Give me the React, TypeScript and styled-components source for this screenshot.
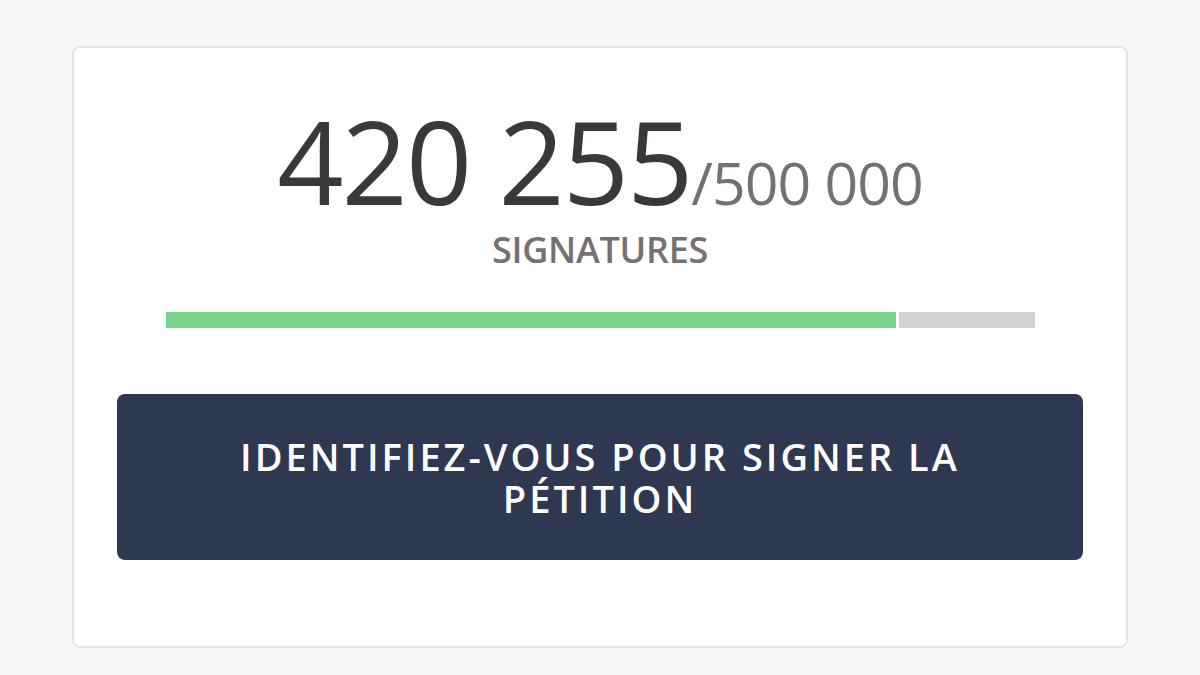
import { FC } from "react";
import styled, { createGlobalStyle } from "styled-components";

const GlobalStyle = createGlobalStyle`
  html, body {
    margin: 0;
    padding: 0;
    background: #f7f7f7;
    font-family: "Open Sans", "Liberation Sans", sans-serif;
  }
`;

const signed = 420255;
const goal = 500000;

const App: FC = () => {
  const ratio = Math.min(signed / goal, 1);
  return (
    <>
      <GlobalStyle />
      <Page>
        <Card>
          <Count>
            <Current>420 255</Current>
            <Goal>/500 000</Goal>
          </Count>
          <Label>Signatures</Label>
          <Progress>
            <Filled style={{ flexBasis: `${ratio * 100}%` }} />
            <Remaining />
          </Progress>
          <SignButton>Identifiez-vous pour signer la pétition</SignButton>
        </Card>
      </Page>
    </>
  );
};

export default App;

const Page = styled.div`
  width: 1200px;
  height: 675px;
  box-sizing: border-box;
  padding: 46px 72px 0;
`;

const Card = styled.div`
  box-sizing: border-box;
  width: 1056px;
  height: 602px;
  background: #ffffff;
  border: 2px solid #e6e6e6;
  border-radius: 8px;
  display: flex;
  flex-direction: column;
  align-items: center;
  padding: 54px 43px 0;
`;

const Count = styled.div`
  line-height: 1;
  height: 116px;
  white-space: nowrap;
`;

const Current = styled.span`
  display: inline-block;
  line-height: 1;
  font-size: 116px;
  font-weight: 400;
  letter-spacing: -2px;
  color: #3a383b;
`;

const Goal = styled.span`
  display: inline-block;
  line-height: 1;
  font-size: 59px;
  font-weight: 400;
  letter-spacing: -1px;
  color: #747074;
`;

const Label = styled.div`
  margin-top: 10px;
  font-size: 36px;
  line-height: 43px;
  font-weight: 600;
  letter-spacing: -0.3px;
  text-transform: uppercase;
  color: #747074;
`;

const Progress = styled.div`
  margin-top: 41px;
  width: 869px;
  height: 16px;
  display: flex;
  gap: 3px;
`;

const Filled = styled.div`
  flex-shrink: 0;
  background: #79d18a;
`;

const Remaining = styled.div`
  flex: 1;
  background: #d3d1d5;
`;

const SignButton = styled.button`
  margin-top: 66px;
  width: 100%;
  box-sizing: border-box;
  padding: 41px 90px;
  border: none;
  border-radius: 8px;
  background: #2e3850;
  color: #ffffff;
  font-family: "Open Sans", "Liberation Sans", sans-serif;
  font-size: 38px;
  line-height: 42px;
  font-weight: 600;
  letter-spacing: 3px;
  text-transform: uppercase;
  text-align: center;
  cursor: pointer;
`;
